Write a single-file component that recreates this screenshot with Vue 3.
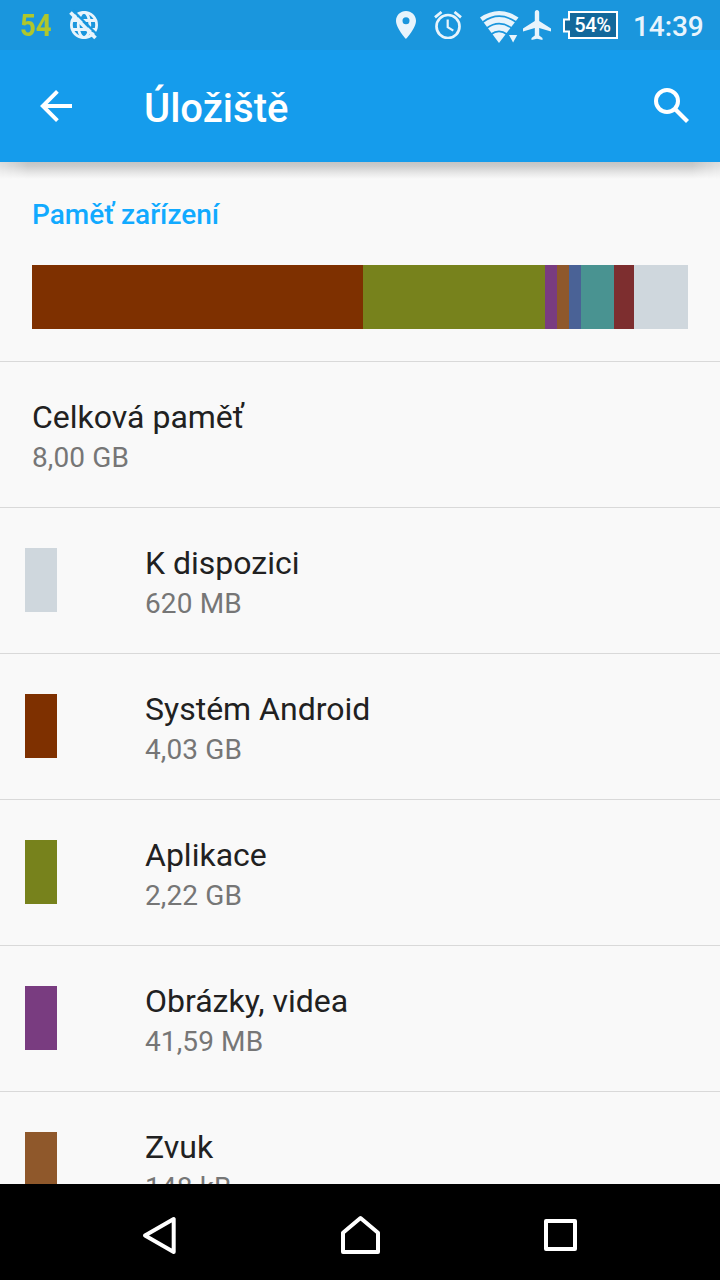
<script setup>
const segments = [
  { color: '#7e3000', width: 331 },
  { color: '#77821c', width: 182 },
  { color: '#793c80', width: 12 },
  { color: '#8f582b', width: 12.4 },
  { color: '#4a6296', width: 11.6 },
  { color: '#499391', width: 33 },
  { color: '#7d2e2f', width: 20 },
  { color: '#cfd7dd', width: 54 },
]

const rows = [
  { title: 'Celková paměť', size: '8,00 GB' },
  { title: 'K dispozici', size: '620 MB', color: '#cfd7dd' },
  { title: 'Systém Android', size: '4,03 GB', color: '#7e3000' },
  { title: 'Aplikace', size: '2,22 GB', color: '#77821c' },
  { title: 'Obrázky, videa', size: '41,59 MB', color: '#793c80' },
  { title: 'Zvuk', size: '148 kB', color: '#8f582b' },
]
</script>

<template>
  <div class="screen">
    <div class="status">
      <span class="level">54</span>
      <svg class="globe" width="32" height="32" viewBox="0 0 32 32" fill="none" stroke="#e8f4fc">
        <g stroke-width="2.8">
          <circle cx="16" cy="16" r="12.6" />
          <ellipse cx="16" cy="16" rx="5.8" ry="12.6" />
          <path d="M4.500 11.500h23M4.500 20.500h23" />
        </g>
        <path d="M5 1.500L31 27.500" stroke="#1a96dd" stroke-width="2.400" />
        <path d="M2.500 3.500L27.500 29" stroke-width="3.600" />
      </svg>
      <span class="spacer"></span>
      <svg class="pin" width="20" height="28" viewBox="0 0 20 28" fill="#e8f4fc">
        <path fill-rule="evenodd" d="M10 0C4.500 0 0 4.400 0 9.800C0 17.200 10 28 10 28S20 17.200 20 9.800C20 4.400 15.500 0 10 0ZM10 13.300A3.500 3.500 0 1 1 10 6.300A3.500 3.500 0 0 1 10 13.300Z" />
      </svg>
      <svg class="alarm" width="28" height="28" viewBox="0 0 28 28" fill="none" stroke="#e8f4fc">
        <circle cx="14" cy="15.500" r="11.500" stroke-width="2.700" />
        <path d="M1 6.300L7.500 1M27 6.300L20.500 1" stroke-width="2.800" />
        <path d="M13.700 8.500V16.200L19.300 19.600" stroke-width="2.200" />
      </svg>
      <svg class="wifi" width="39" height="32" viewBox="0 0 39 32">
        <path fill="#e8f4fc" d="M0 6.500Q19 -6.500 38.500 6.500L19 32Z" />
        <g fill="none" stroke="#1a96dd" stroke-width="1.700">
          <path d="M3 11Q19 -.6 36 11" />
          <path d="M6.500 17.300Q19 8 32 17.300" />
          <path d="M11 23.300Q19 17.300 27 23.300" />
        </g>
        <path fill="#e8f4fc" stroke="#1a96dd" stroke-width="2.400" paint-order="stroke" d="M29 24H37.200L33.100 31.500Z" />
      </svg>
      <svg class="plane" width="28" height="30" viewBox="0 0 28 30" fill="#e8f4fc">
        <path d="M14 0C12.700 0 11.800 1 11.800 2.300V11L0 18.500V21.500L11.800 18V25.500L8.500 28V30L14 28.700L19.500 30V28L16.200 25.500V18L28 21.500V18.500L16.200 11V2.300C16.200 1 15.300 0 14 0Z" />
      </svg>
      <div class="battery">
        <svg width="55" height="28" viewBox="0 0 55 28">
          <path d="M6 1H54V27H6V20.500H1V8.500H6Z" fill="#12689b" stroke="#fff" stroke-width="2" />
        </svg>
        <span>54%</span>
      </div>
      <span class="time">14:39</span>
    </div>

    <header class="appbar">
      <svg class="back" width="32" height="32" viewBox="0 0 32 32" fill="none" stroke="#fff" stroke-width="3.900">
        <path d="M32 16H3M17.400 1.400L2.800 16L17.400 30.600" />
      </svg>
      <h1>Úložiště</h1>
      <svg class="search" width="36" height="36" viewBox="0 0 36 36" fill="none" stroke="#fff">
        <circle cx="13" cy="13" r="11" stroke-width="4" />
        <path d="M21.500 21.500L33.500 33.500" stroke-width="4.200" />
      </svg>
    </header>

    <main class="content">
      <div class="shadow"></div>
      <section class="summary">
        <h2>Paměť zařízení</h2>
        <div class="bar">
          <i v-for="s in segments" :key="s.color" :style="{ width: s.width + 'px', background: s.color }"></i>
        </div>
      </section>
      <div v-for="r in rows" :key="r.title" class="row">
        <div v-if="r.color" class="swatch-cell">
          <div class="swatch" :style="{ background: r.color }"></div>
        </div>
        <div class="text">
          <div class="title">{{ r.title }}</div>
          <div class="size">{{ r.size }}</div>
        </div>
      </div>
    </main>

    <nav class="navbar">
      <svg width="36" height="40" viewBox="0 0 36 40"><path d="M31.700 4V37L3 20.500Z" /></svg>
      <svg width="40" height="40" viewBox="0 0 40 40"><path d="M3 17.800L20.500 3L38 17.800V37H3Z" /></svg>
      <svg width="36" height="40" viewBox="0 0 36 40"><path d="M4 6H33V34H4Z" /></svg>
    </nav>
  </div>
</template>

<style>
body { margin: 0; }
</style>

<style scoped>
.screen {
  width: 720px;
  height: 1280px;
  display: flex;
  flex-direction: column;
  overflow: hidden;
  background: #f9f9f9;
  font-family: Roboto, "Noto Sans", sans-serif;
}
.status {
  height: 50px;
  flex: none;
  box-sizing: border-box;
  padding: 0 16px 0 20px;
  display: flex;
  align-items: flex-start;
  background: #1a96dd;
  color: #e8f4fc;
}
svg { display: block; flex: none; }
.level {
  width: 32px;
  font-size: 31px;
  line-height: 36px;
  margin-top: 8px;
  font-weight: 700;
  color: #afc72c;
  transform: scaleX(.89);
  transform-origin: left;
}
.globe { margin: 9px 0 0 16px; }
.spacer { flex: 1; }
.pin { margin-top: 11px; }
.alarm { margin: 11px 0 0 18px; }
.wifi { margin: 11px 0 0 18px; }
.plane { margin: 10px 0 0 4px; }
.battery {
  width: 55px;
  height: 28px;
  margin: 11px 0 0 12px;
  display: grid;
}
.battery > * { grid-area: 1 / 1; }
.battery span {
  padding-left: 4px;
  text-align: center;
  color: #fff;
  font-size: 20px;
  line-height: 28px;
  font-weight: 500;
  letter-spacing: -.3px;
}
.time {
  width: 71px;
  margin: 10px 0 0 15px;
  font-size: 28px;
  line-height: 33px;
  font-weight: 500;
  letter-spacing: -.1px;
  white-space: nowrap;
}
.appbar {
  height: 112px;
  flex: none;
  box-sizing: border-box;
  padding: 0 30px 0 40px;
  display: flex;
  align-items: center;
  background: #159cec;
}
.appbar h1 {
  flex: 1;
  margin: 6px 0 0 72px;
  color: #fff;
  font-size: 40px;
  line-height: 48px;
  font-weight: 500;
}
.content {
  flex: 1;
  min-height: 0;
  overflow: hidden;
  position: relative;
}
.shadow {
  position: absolute;
  top: 0;
  left: 0;
  right: 0;
  height: 17px;
  background: linear-gradient(#c4c4c4, #cdcdcd 25%, #e7e7e7 65%, #f9f9f9);
  mask-image: linear-gradient(90deg, rgba(0, 0, 0, .5), #000 28px, #000 692px, rgba(0, 0, 0, .5));
}
.summary {
  height: 199px;
  box-sizing: border-box;
  padding: 36px 32px 0;
}
.summary h2 {
  margin: 0 0 34px;
  color: #11aaff;
  font-size: 28px;
  line-height: 33px;
  font-weight: 500;
}
.bar { display: flex; height: 64px; }
.bar i { display: block; flex: none; }
.row {
  height: 146px;
  box-sizing: border-box;
  border-top: 1px solid #d9d9d9;
  padding: 36px 32px 0 25px;
  display: flex;
}
.swatch-cell { width: 113px; }
.swatch {
  width: 32px;
  height: 64px;
  margin-top: 4px;
}
.text { margin-left: 7px; }
.title {
  color: #212121;
  font-size: 32px;
  line-height: 38px;
}
.size {
  margin-top: 5px;
  color: #767676;
  font-size: 28px;
  line-height: 33px;
  letter-spacing: .12px;
}
.navbar {
  height: 96px;
  flex: none;
  box-sizing: border-box;
  background: #000;
  display: flex;
  justify-content: space-between;
  align-items: flex-start;
  padding: 31px 142px 0;
}
.navbar path {
  fill: none;
  stroke: #fff;
  stroke-width: 4;
  stroke-linejoin: round;
}
</style>
